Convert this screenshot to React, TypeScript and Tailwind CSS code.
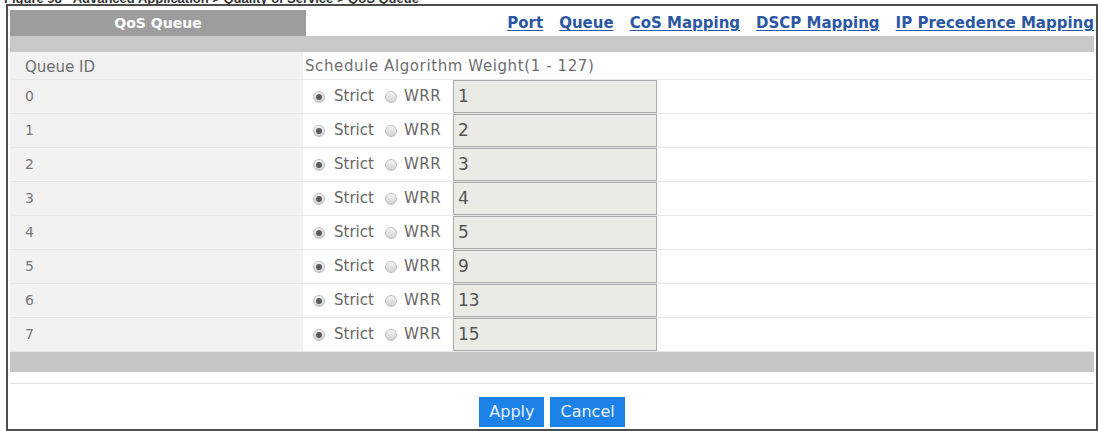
import React from "react";

const font = { fontFamily: '"DejaVu Sans", "Liberation Sans", sans-serif' };

function Radio({ checked }: { checked: boolean }) {
  return (
    <span className="w-[12px] h-[12px] rounded-full border border-[#bdbdbd] bg-gradient-to-b from-[#f4f4f4] to-[#d2d2d2] flex items-center justify-center shrink-0">
      {checked && <span className="w-[6px] h-[6px] rounded-full bg-[#5a5a5a]" />}
    </span>
  );
}

const rows = [
  { id: "0", w: "1" },
  { id: "1", w: "2" },
  { id: "2", w: "3" },
  { id: "3", w: "4" },
  { id: "4", w: "5" },
  { id: "5", w: "9" },
  { id: "6", w: "13" },
  { id: "7", w: "15" },
];

const links = ["Port", "Queue", "CoS Mapping", "DSCP Mapping", "IP Precedence Mapping"];

export default function App() {
  return (
    <div className="w-[1101px] h-[431px] bg-white overflow-hidden" style={font}>
      <div className="h-[4px] overflow-hidden pl-[4px]">
        <div className="-mt-[11px] text-[13px] font-bold text-[#333] whitespace-nowrap" style={{ fontFamily: '"Liberation Sans", sans-serif' }}>
          Figure 98&nbsp;&nbsp;&nbsp;Advanced Application &gt; Quality of Service &gt; QoS Queue
        </div>
      </div>
      <div className="ml-[6px] mr-[3px] h-[427px] border-2 border-[#4d4d4d] pt-[4px] px-[2px] pb-[2px] flex flex-col">
        {/* top tab + links */}
        <div className="flex h-[26px] items-stretch">
          <div className="w-[296px] bg-[#9d9d9d] flex items-center justify-center text-white font-bold text-[14px]">
            QoS Queue
          </div>
          <div className="flex-1 flex items-center justify-end gap-[16px] pt-[1px]">
            {links.map((l) => (
              <span key={l} className="text-[15px] font-bold text-[#2c56a3] underline underline-offset-2 whitespace-nowrap">
                {l}
              </span>
            ))}
          </div>
        </div>
        <div className="h-[16px] bg-[#c9c9c9]" />
        {/* header row */}
        <div className="flex h-[28px] border-b border-[#e6e6e6]">
          <div className="w-[293px] bg-[#f2f2f2] pl-[15px] flex items-center pt-[3px] text-[15px] text-[#6e6e6e]">Queue ID</div>
          <div className="flex-1 pl-[2px] flex items-center pt-[1px] text-[15px] tracking-[0.6px] text-[#6e6e6e] whitespace-nowrap">
            Schedule Algorithm Weight(1 - 127)
          </div>
        </div>
        {rows.map((r) => (
          <div key={r.id} className="flex h-[34px] border-b border-[#e6e6e6]">
            <div className="w-[293px] bg-[#f2f2f2] pl-[15px] flex items-center text-[14px] text-[#777]">{r.id}</div>
            <div className="w-[150px] flex items-center pl-[10px] text-[15px] text-[#666]">
              <Radio checked />
              <span className="ml-[9px]">Strict</span>
              <span className="ml-[11px]"><Radio checked={false} /></span>
              <span className="ml-[7px] tracking-[0.5px]">WRR</span>
            </div>
            <div className="w-[204px] border border-[#aaaaaa] bg-[#ebebe6] flex items-center pl-[4px] text-[17px] text-[#555]">
              {r.w}
            </div>
            <div className="flex-1" />
          </div>
        ))}
        <div className="h-[20px] bg-[#c6c6c6]" />
        <div className="h-[11px]" />
        <div className="h-[1px] bg-[#e4e4e4]" />
        <div className="flex-1 flex items-end justify-center gap-[6px]">
          <button className="h-[30px] px-[10px] bg-[#1c82e8] text-[#e8f1ff] text-[16px]" style={font}>Apply</button>
          <button className="h-[30px] px-[10px] bg-[#1c82e8] text-[#e8f1ff] text-[16px]" style={font}>Cancel</button>
        </div>
      </div>
    </div>
  );
}
